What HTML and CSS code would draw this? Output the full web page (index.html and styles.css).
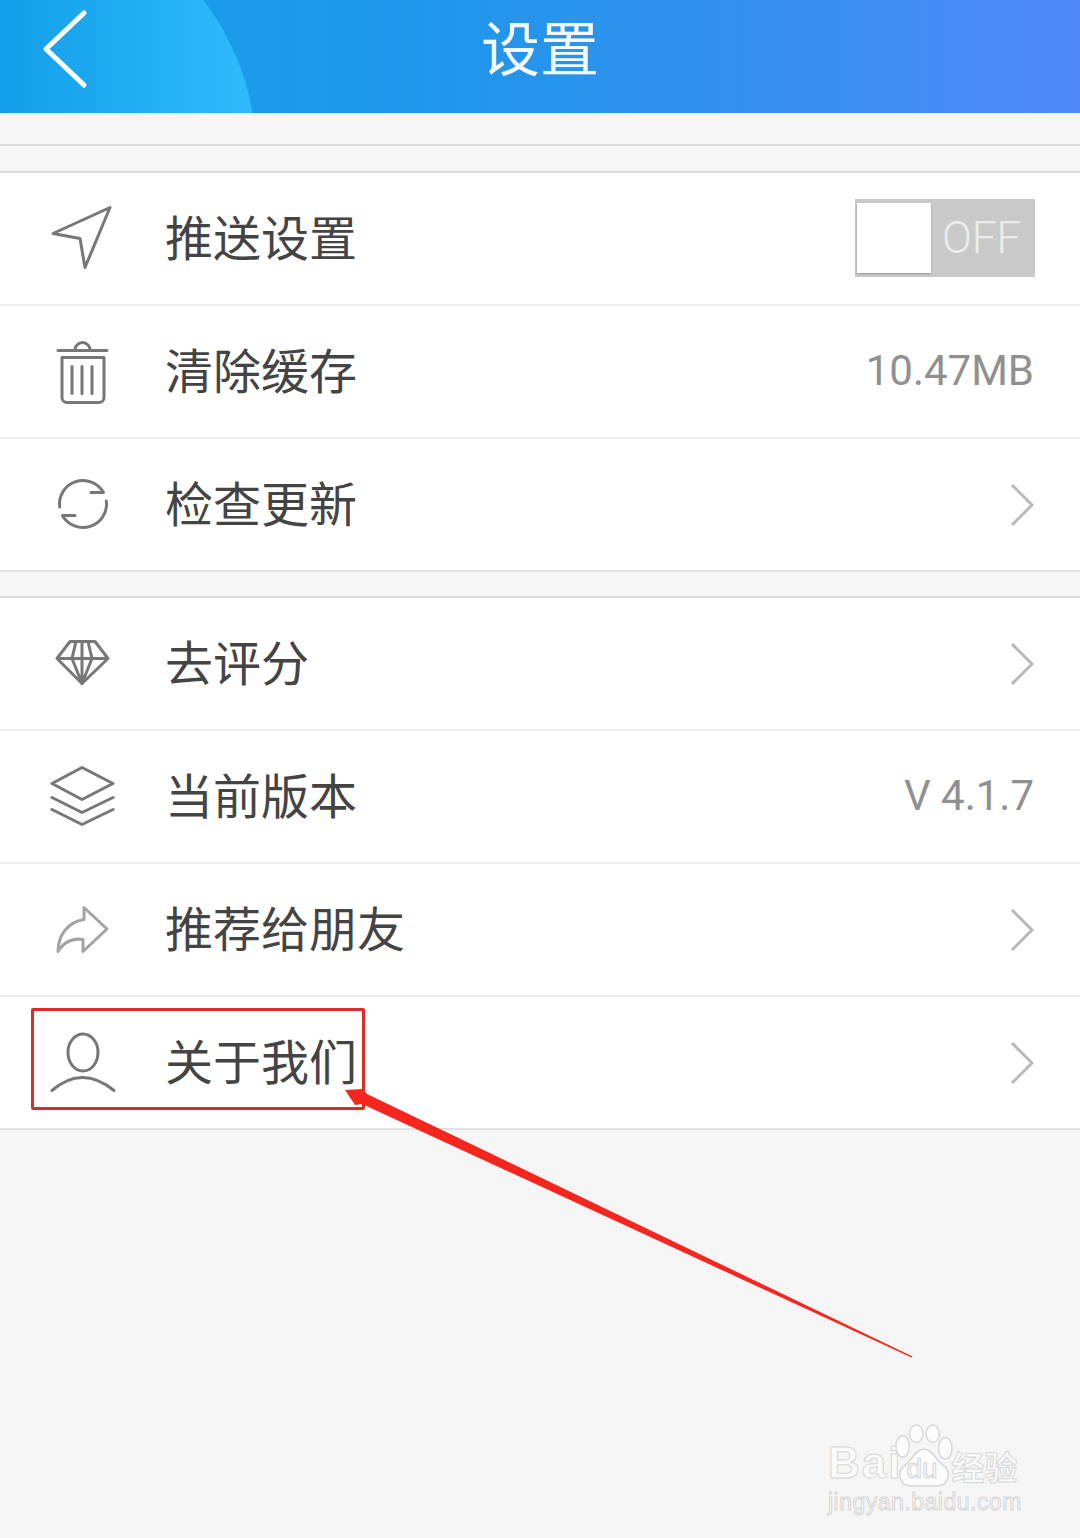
FILE: index.html
```html
<!DOCTYPE html>
<html>
	<head>
		<meta charset="UTF-8">
		<title>设置</title>
		<link rel="stylesheet" href="styles.css">
	</head>
	<body>
		<div class="page">
			<div class="top-bar">
				<svg class="back" width="46" height="80" viewBox="0 0 46 80"><path d="M42 4 L4 40 L42 76"/></svg>
				<h1>设置</h1>
			</div>
			<div class="top-gap"></div>

			<div class="group">
				<div class="row">
					<svg class="icon" viewBox="0 0 66 66"><path d="M60 1.500 L3 27.500 L30 32.500 L35 61.500 Z"/></svg>
					<span class="name">推送设置</span>
					<div class="switch">
						<span class="knob"></span>
						<span class="off">OFF</span>
					</div>
				</div>
				<div class="row">
					<svg class="icon" viewBox="0 0 66 66">
						<path d="M8 11.500 H57 M25 11 A7.500 7.500 0 0 1 40 11"/>
						<path d="M12 18.500 H54 V58.500 A5 5 0 0 1 49 63.500 H17 A5 5 0 0 1 12 58.500 Z"/>
						<path d="M22 27.500 V54.500 M32 27.500 V54.500 M42 27.500 V54.500"/>
					</svg>
					<span class="name">清除缓存</span>
					<span class="value">10.47MB</span>
				</div>
				<div class="row">
					<svg class="icon" viewBox="0 0 66 66">
						<path d="M9.700 35 A23.500 23.500 0 0 1 53.500 20.500 H41"/>
						<path d="M56.300 29 A23.500 23.500 0 0 1 12.500 43.500 H25"/>
					</svg>
					<span class="name">检查更新</span>
					<svg class="more" viewBox="0 0 24 44"><path d="M2 2 L22 22 L2 42"/></svg>
				</div>
			</div>

			<div class="group">
				<div class="row">
					<svg class="icon" viewBox="0 0 66 66">
						<path d="M20 10.500 H45 L58 27.500 L32 52.500 L7 27.500 Z M7 27.500 H58"/>
						<path d="M26 10.500 L22 27.500 L32 52.500 L42 27.500 L38 10.500 M32 10.500 V52.500"/>
					</svg>
					<span class="name">去评分</span>
					<svg class="more" viewBox="0 0 24 44"><path d="M2 2 L22 22 L2 42"/></svg>
				</div>
				<div class="row">
					<svg class="icon" viewBox="0 0 66 66">
						<path d="M32 3.500 L63 19.500 L32 35.500 L2 19.500 Z"/>
						<path d="M2 33.500 L32 48.500 L63 33.500 M2 45.500 L32 60.500 L63 45.500"/>
					</svg>
					<span class="name">当前版本</span>
					<span class="value">V 4.1.7</span>
				</div>
				<div class="row">
					<svg class="icon light" viewBox="0 0 66 66"><path d="M57 32 L34 10.500 V22.500 C18 25 8 38 8 54.500 C14 44 24 41 33 42.500 V54.500 Z"/></svg>
					<span class="name">推荐给朋友</span>
					<svg class="more" viewBox="0 0 24 44"><path d="M2 2 L22 22 L2 42"/></svg>
				</div>
				<div class="row">
					<svg class="icon" viewBox="0 0 66 66">
						<ellipse cx="33" cy="22.500" rx="15" ry="18.500"/>
						<path d="M2 60.500 Q32 34.500 64 60.500"/>
					</svg>
					<span class="name">关于我们</span>
					<svg class="more" viewBox="0 0 24 44"><path d="M2 2 L22 22 L2 42"/></svg>
				</div>
			</div>

			<!-- 标注 -->
			<div class="mark-box"></div>
			<svg class="mark-arrow" width="1080" height="1538" viewBox="0 0 1080 1538">
				<polygon points="345,1090 363,1089 367,1094 912.500,1356.500 911.500,1357.500 362,1104 355,1105"/>
			</svg>

			<!-- 水印 -->
			<div class="water">
				<div class="water-top">
					<span class="w-bai">Bai</span>
					<div class="paw">
						<svg viewBox="0 0 62 64">
							<ellipse cx="9" cy="22" rx="7" ry="11"/>
							<ellipse cx="23" cy="9" rx="7" ry="9"/>
							<ellipse cx="40" cy="9" rx="7" ry="9"/>
							<ellipse cx="53" cy="24" rx="7" ry="11"/>
							<path d="M31 25 C40 25 43 36 50 41 C61 49 56 63 44 63 C38 63 24 63 18 63 C6 63 1 49 12 41 C19 36 22 25 31 25 Z"/>
						</svg>
						<span class="w-du">du</span>
					</div>
					<span class="w-cn">经验</span>
				</div>
				<div class="w-url">jingyan.baidu.com</div>
			</div>
		</div>
	</body>
</html>
```

FILE: styles.css
```css
*{
	margin: 0;
	padding: 0;
	box-sizing: border-box;
}
body{
	background: #f5f5f5;
	font-family: "Noto Sans CJK SC", "Liberation Sans", sans-serif;
}
.page{
	width: 1080px;
	height: 1538px;
	position: relative;
	overflow: hidden;
}

/* 顶部 */
.top-bar{
	height: 113px;
	position: relative;
	overflow: hidden;
	display: flex;
	align-items: center;
	justify-content: center;
	background: linear-gradient(90deg, #159fe9 0%, #1f97ea 40%, #3590ef 70%, #4f88f9 100%);
}
.top-bar:before{
	content: "";
	position: absolute;
	left: -252px;
	top: -99px;
	width: 508px;
	height: 508px;
	border-radius: 50%;
	background: linear-gradient(90deg, #129fe9 50%, #2eb9fb 97%);
}
.back{
	position: absolute;
	left: 42px;
	top: 9px;
}
.back path{
	fill: none;
	stroke: #fff;
	stroke-width: 5;
	stroke-linecap: round;
	stroke-linejoin: round;
}
.top-bar h1{
	position: relative;
	margin-top: -22px;
	font-size: 59px;
	font-weight: 400;
	line-height: 100px;
	color: #f4f8ff;
}
.top-gap{
	height: 33px;
	border-bottom: 2px solid #dcdcdc;
}

/* 列表 */
.group{
	margin-top: 24px;
	border-top: 2px solid #dcdcdc;
	background: #fff;
}
.top-gap + .group{
	margin-top: 25px;
}
.row{
	height: 133px;
	padding: 0 46px 0 50px;
	display: flex;
	align-items: center;
	border-bottom: 2px solid #efefef;
}
.group .row:last-child{
	border-bottom-color: #e2e2e2;
}
.icon{
	width: 66px;
	height: 66px;
	flex: none;
}
.icon path, .icon ellipse{
	fill: none;
	stroke: #777;
	stroke-width: 3;
	stroke-linecap: round;
	stroke-linejoin: round;
}
.icon.light path{
	stroke: #a3a3a3;
}
.name{
	margin: -8px 0 0 49px;
	flex: 1;
	font-size: 48px;
	color: #444;
	line-height: 60px;
}
.value{
	margin-top: -2px;
	font-family: Roboto, "Liberation Sans", sans-serif;
	font-size: 42px;
	color: #909090;
	line-height: 60px;
}
.more{
	width: 24px;
	height: 44px;
	flex: none;
}
.more path{
	fill: none;
	stroke: #b8b8b8;
	stroke-width: 3;
}
.switch{
	width: 180px;
	height: 78px;
	margin: -2px -1px 0 0;
	background: #c9c9c9;
	display: flex;
	align-items: center;
	padding-left: 2px;
}
.knob{
	width: 74px;
	height: 70px;
	background: #fff;
	box-shadow: 0 1px 2px #999;
}
.off{
	margin-left: 11px;
	font-family: Roboto, "Liberation Sans", sans-serif;
	font-weight: 300;
	font-size: 44px;
	color: #ececec;
}

/* 标注 */
.mark-box{
	position: absolute;
	left: 31px;
	top: 1008px;
	width: 334px;
	height: 102px;
	border: 3px solid #dc2c26;
	border-radius: 2px;
}
.mark-arrow{
	position: absolute;
	left: 0;
	top: 0;
}
.mark-arrow polygon{
	fill: #f5261d;
}

/* 水印 */
.water{
	position: absolute;
	left: 828px;
	top: 1422px;
	width: 200px;
	color: #fafafa;
	-webkit-text-stroke: 1px #d6d6d6;
}
.water-top{
	display: flex;
	align-items: flex-end;
	height: 66px;
}
.w-bai{
	font-family: "Liberation Sans", sans-serif;
	font-weight: 700;
	font-size: 44px;
	line-height: 50px;
	letter-spacing: 2px;
}
.paw{
	position: relative;
	width: 60px;
	height: 64px;
	flex: none;
	margin-left: -8px;
}
.paw svg{
	width: 60px;
	height: 64px;
	display: block;
}
.paw svg ellipse, .paw svg path{
	fill: #fcfcfc;
	stroke: #d6d6d6;
	stroke-width: 1.500;
}
.w-du{
	position: absolute;
	left: 12px;
	bottom: 2px;
	font-family: "Liberation Sans", sans-serif;
	font-size: 28px;
	line-height: 34px;
}
.w-cn{
	margin-left: -3px;
	font-size: 33px;
	line-height: 44px;
	font-weight: 700;
}
.w-url{
	margin-top: 1px;
	font-family: "Liberation Sans", sans-serif;
	font-size: 23px;
	line-height: 26px;
	letter-spacing: 0.500px;
}
```
